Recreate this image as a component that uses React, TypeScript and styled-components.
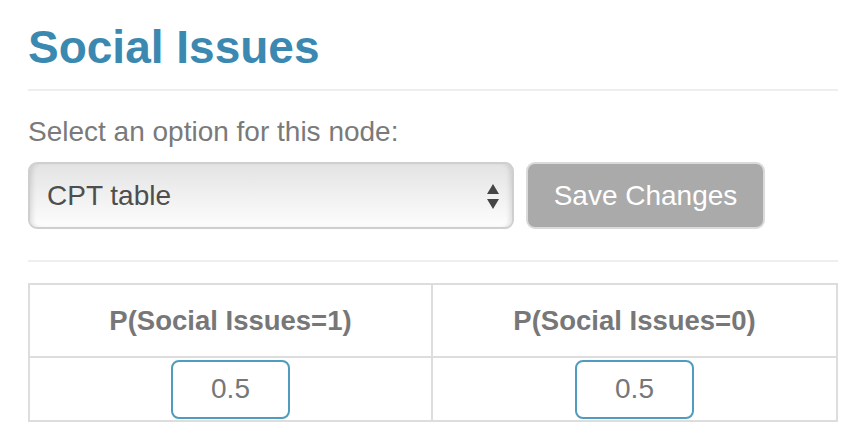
import React from "react";
import styled, { createGlobalStyle } from "styled-components";

const GlobalStyle = createGlobalStyle`
  html, body {
    margin: 0;
    padding: 0;
    background: #ffffff;
  }
  body {
    font-family: "Liberation Sans", Helvetica, Arial, sans-serif;
  }
`;

const Page = styled.div`
  width: 810px;
  padding: 0 14px 0 28px;
`;

const Title = styled.h2`
  margin: 20px 0 0;
  font-size: 46px;
  line-height: 54px;
  font-weight: 700;
  color: #3b89b0;
`;

const Rule = styled.div<{ $top: number }>`
  margin-top: ${(p) => p.$top}px;
  height: 2px;
  background: #eeeeee;
`;

const Label = styled.div`
  margin-top: 21px;
  font-size: 28px;
  line-height: 40px;
  color: #7a7a7a;
`;

const Controls = styled.div`
  margin-top: 10px;
  display: flex;
  gap: 12px;
  height: 67px;
`;

const SelectWrap = styled.div`
  position: relative;
  width: 486px;
  height: 67px;
`;

const Select = styled.select`
  appearance: none;
  -webkit-appearance: none;
  width: 100%;
  height: 100%;
  box-sizing: border-box;
  margin: 0;
  padding: 0 40px 0 17px;
  border: 2px solid #cfcfcf;
  border-radius: 9px;
  background: linear-gradient(to bottom, #e3e3e3 0%, #efefef 45%, #fdfdfd 100%);
  box-shadow: inset 5px 0 5px -3px rgba(0, 0, 0, 0.12),
    inset -5px 0 5px -3px rgba(0, 0, 0, 0.12);
  font-family: "Liberation Sans", Helvetica, Arial, sans-serif;
  font-size: 28px;
  color: #4e4e4e;
  outline: none;
`;

const Arrows = styled.svg`
  position: absolute;
  right: 14px;
  top: 22px;
  width: 14px;
  height: 25px;
  pointer-events: none;
`;

const SaveButton = styled.button`
  width: 239px;
  height: 67px;
  box-sizing: border-box;
  margin: 0;
  padding: 0;
  border: 2px solid #dadada;
  border-radius: 9px;
  background: #aaaaaa;
  color: #ffffff;
  font-family: "Liberation Sans", Helvetica, Arial, sans-serif;
  font-size: 28px;
`;

const Table = styled.table`
  margin-top: 21px;
  width: 810px;
  table-layout: fixed;
  border-collapse: separate;
  border-spacing: 0;
  border: 2px solid #dddddd;
`;

const HeadCell = styled.th<{ $first?: boolean }>`
  height: 71px;
  padding: 0;
  border-bottom: 2px solid #dddddd;
  border-right: ${(p) => (p.$first ? "2px solid #dddddd" : "none")};
  font-size: 27.5px;
  line-height: 32px;
  font-weight: 700;
  color: #777777;
  text-align: center;
  vertical-align: middle;
`;

const Cell = styled.td<{ $first?: boolean }>`
  height: 62px;
  padding: 0;
  border-right: ${(p) => (p.$first ? "2px solid #dddddd" : "none")};
  text-align: center;
  vertical-align: middle;
`;

const ProbInput = styled.input`
  display: block;
  margin: 0 auto;
  width: 119px;
  height: 59px;
  box-sizing: border-box;
  padding: 0;
  border: 2px solid #4f9cbe;
  border-radius: 8px;
  background: #ffffff;
  font-family: "Liberation Sans", Helvetica, Arial, sans-serif;
  font-size: 28px;
  color: #777777;
  text-align: center;
  outline: none;
`;

export default function App() {
  return (
    <>
      <GlobalStyle />
      <Page>
        <Title>Social Issues</Title>
        <Rule $top={15} />
        <Label>Select an option for this node:</Label>
        <Controls>
          <SelectWrap>
            <Select defaultValue="cpt">
              <option value="cpt">CPT table</option>
            </Select>
            <Arrows viewBox="0 0 14 25">
              <polygon points="7,0 13,10 1,10" fill="#454545" />
              <polygon points="1,15 13,15 7,25" fill="#454545" />
            </Arrows>
          </SelectWrap>
          <SaveButton>Save Changes</SaveButton>
        </Controls>
        <Rule $top={31} />
        <Table>
          <thead>
            <tr>
              <HeadCell $first>P(Social Issues=1)</HeadCell>
              <HeadCell>P(Social Issues=0)</HeadCell>
            </tr>
          </thead>
          <tbody>
            <tr>
              <Cell $first>
                <ProbInput defaultValue="0.5" />
              </Cell>
              <Cell>
                <ProbInput defaultValue="0.5" />
              </Cell>
            </tr>
          </tbody>
        </Table>
      </Page>
    </>
  );
}
